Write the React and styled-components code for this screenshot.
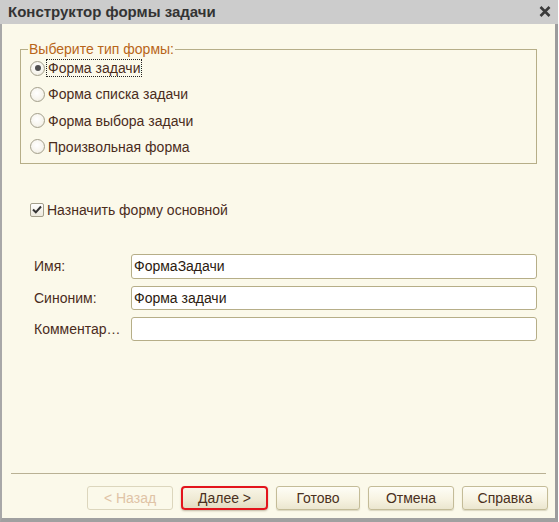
import React from "react";
import styled, { createGlobalStyle, css } from "styled-components";

const Global = createGlobalStyle`
  html, body { margin: 0; padding: 0; background: #ffffff; }
  * { box-sizing: border-box; }
`;

const Window = styled.div`
  width: 558px;
  height: 522px;
  display: flex;
  flex-direction: column;
  background: #fbf9ea;
  border-left: 2px solid #a8a8a8;
  border-right: 3px solid #9c9c9c;
  border-bottom: 4px solid #a0a0a0;
  font-family: "Liberation Sans", Arial, sans-serif;
  font-size: 14px;
  color: #4a2c1c;
`;

const TitleBar = styled.div`
  height: 24px;
  margin-left: -2px;
  margin-right: -3px;
  padding: 0 7px 1px 8px;
  background: #cccccc;
  display: flex;
  align-items: center;
  justify-content: space-between;
  flex: none;
`;

const Title = styled.div`
  font-weight: bold;
  font-size: 15px;
  color: #333333;
`;

const Content = styled.div`
  flex: 1;
  display: flex;
  flex-direction: column;
  padding: 17px 18px 0 18px;
`;

const Group = styled.fieldset`
  margin: 0;
  padding: 0 8px 6px 7px;
  border: 1px solid #b6ae88;
  display: flex;
  flex-direction: column;
  gap: 6.33px;
`;

const Legend = styled.legend`
  padding: 0 1px;
  margin-left: 0;
  color: #b86519;
  line-height: 16px;
`;

const OptionRow = styled.label`
  display: flex;
  align-items: center;
  gap: 2px;
  height: 20px;
  margin-left: 2px;
  margin-top: ${(p) => (p.$first ? "1px" : "0")};
`;

const Radio = styled.span`
  width: 15px;
  height: 15px;
  border-radius: 50%;
  border: 1px solid #a39f8c;
  background: radial-gradient(circle at 45% 40%, #ffffff 0%, #f6f4ec 60%, #e2dfd0 100%);
  display: flex;
  align-items: center;
  justify-content: center;
  flex: none;
  ${(p) =>
    p.$checked &&
    css`
      &::after {
        content: "";
        width: 6px;
        height: 6px;
        border-radius: 50%;
        background: #505050;
      }
    `}
`;

const OptionText = styled.span`
  padding: 0 1px;
  line-height: 16px;
  outline: ${(p) => (p.$focused ? "1px dotted #222" : "none")};
  outline-offset: 0;
`;

const CheckRow = styled.label`
  display: flex;
  align-items: center;
  gap: 3px;
  height: 20px;
  margin: 36px 0 0 10px;
`;

const CheckBox = styled.span`
  width: 14px;
  height: 14px;
  border-radius: 2px;
  border: 1px solid #a39f8c;
  background: linear-gradient(#ffffff, #ece9dc);
  display: flex;
  align-items: center;
  justify-content: center;
  flex: none;
`;

const Fields = styled.div`
  margin: 34px 0 0 14px;
  display: grid;
  grid-template-columns: 97px 1fr;
  row-gap: 7px;
  align-items: center;
`;

const FieldLabel = styled.div`
  color: #4a2c1c;
  white-space: nowrap;
  overflow: hidden;
  text-overflow: ellipsis;
  padding-right: 5px;
`;

const Input = styled.div`
  height: ${(p) => p.$h || 24}px;
  border: 1px solid #b6ae88;
  border-radius: 3px;
  background: #ffffff;
  padding: 0 2px;
  display: flex;
  align-items: center;
  color: #2b1a10;
`;

const Spacer = styled.div`
  flex: 1;
`;

const Separator = styled.div`
  height: 1px;
  background: #b9b194;
  margin: 0 -9px 0 -9px;
`;

const ButtonRow = styled.div`
  display: flex;
  justify-content: flex-end;
  gap: 8px;
  margin: 12px -11px 8px 0;
`;

const Button = styled.button`
  width: ${(p) => p.$w || 86}px;
  height: 24px;
  padding: 0;
  font-family: inherit;
  font-size: 14px;
  color: ${(p) => (p.disabled ? "#e0c3a6" : "#4a3020")};
  border: 1px solid ${(p) => (p.disabled ? "#dcd6bd" : "#c4bc98")};
  border-radius: 3px;
  background: ${(p) =>
    p.disabled
      ? "#fbf9ea"
      : "linear-gradient(#fefdf6 0%, #f7f3e2 55%, #ebe6cf 100%)"};
  box-shadow: ${(p) => (p.disabled ? "none" : "0 1px 1px rgba(120,110,70,0.25)")};
  ${(p) =>
    p.$default &&
    css`
      border: 2px solid #e3141c;
      border-radius: 4px;
      background: linear-gradient(#f8f5e6 0%, #eee9d3 60%, #e2dcc1 100%);
      box-shadow: 0 1px 2px rgba(80, 60, 30, 0.35);
    `}
`;

const options = [
  "Форма задачи",
  "Форма списка задачи",
  "Форма выбора задачи",
  "Произвольная форма",
];

export default function App() {
  return (
    <>
      <Global />
      <Window>
        <TitleBar>
          <Title>Конструктор формы задачи</Title>
          <svg width="12" height="11" viewBox="0 0 12 11">
            <path d="M1.5 1 L10.5 10 M10.5 1 L1.5 10" stroke="#3a3a3a" strokeWidth="2.6" strokeLinecap="butt" />
          </svg>
        </TitleBar>
        <Content>
          <Group>
            <Legend>Выберите тип формы:</Legend>
            {options.map((o, i) => (
              <OptionRow key={o} $first={i === 0}>
                <Radio $checked={i === 0} />
                <OptionText $focused={i === 0}>{o}</OptionText>
              </OptionRow>
            ))}
          </Group>
          <CheckRow>
            <CheckBox>
              <svg width="10" height="9" viewBox="0 0 10 9">
                <path d="M1 4.5 L3.8 7.3 L9 1.5" fill="none" stroke="#333" strokeWidth="2" />
              </svg>
            </CheckBox>
            <span>Назначить форму основной</span>
          </CheckRow>
          <Fields>
            <FieldLabel>Имя:</FieldLabel>
            <Input $h={25}>ФормаЗадачи</Input>
            <FieldLabel>Синоним:</FieldLabel>
            <Input>Форма задачи</Input>
            <FieldLabel>Комментарий:</FieldLabel>
            <Input />
          </Fields>
          <Spacer />
          <Separator />
          <ButtonRow>
            <Button disabled>&lt; Назад</Button>
            <Button $default $w={87}>Далее &gt;</Button>
            <Button $w={84}>Готово</Button>
            <Button>Отмена</Button>
            <Button>Справка</Button>
          </ButtonRow>
        </Content>
      </Window>
    </>
  );
}
